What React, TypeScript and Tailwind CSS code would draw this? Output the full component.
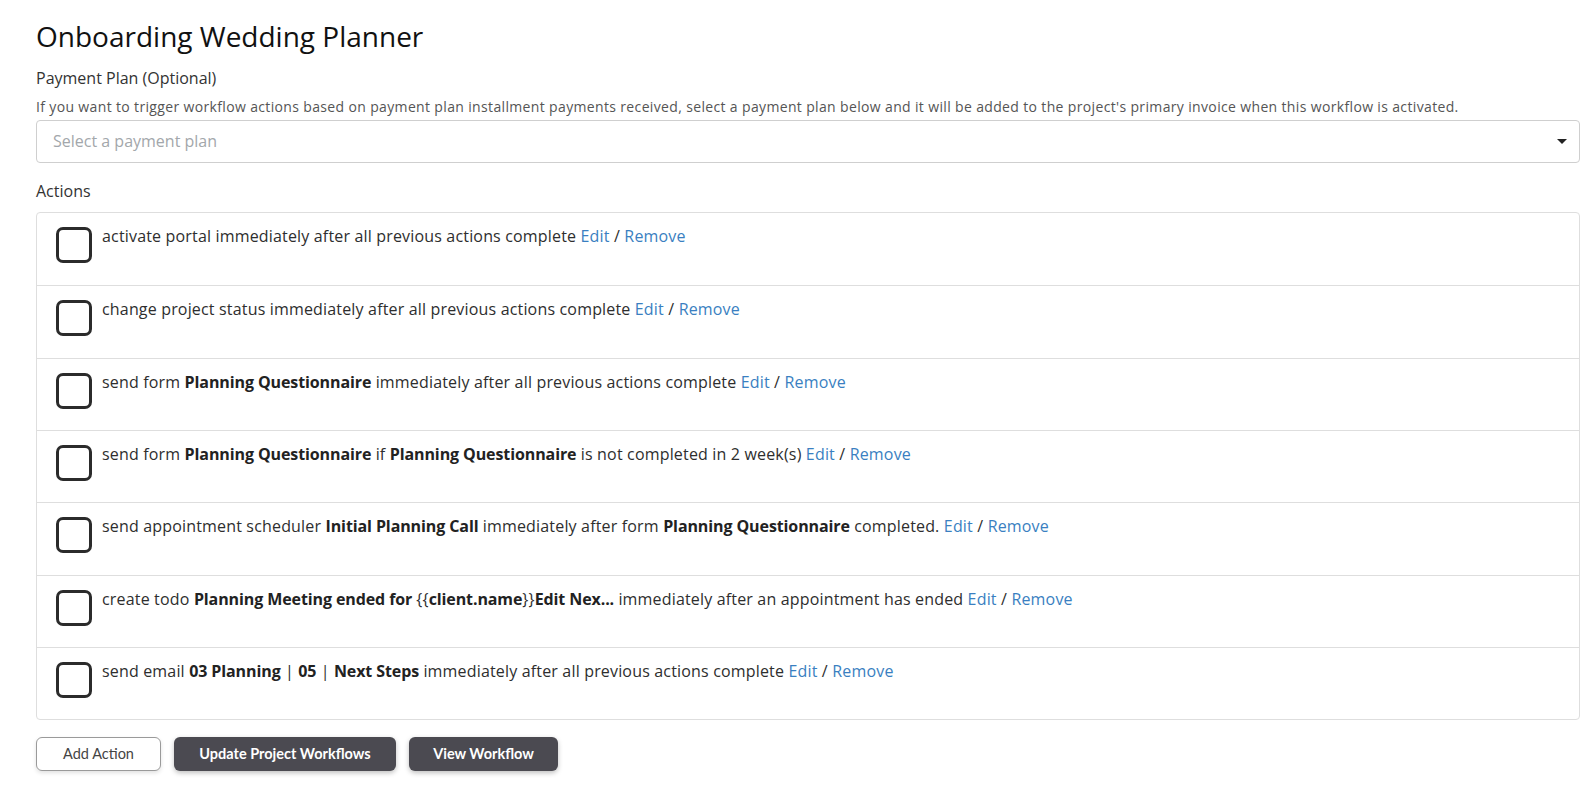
import React from "react";

type Part = { t: string; b?: boolean };

const rows: Part[][] = [
  [{ t: "activate portal immediately after all previous actions complete" }],
  [{ t: "change project status immediately after all previous actions complete" }],
  [
    { t: "send form " },
    { t: "Planning Questionnaire", b: true },
    { t: " immediately after all previous actions complete" },
  ],
  [
    { t: "send form " },
    { t: "Planning Questionnaire", b: true },
    { t: " if " },
    { t: "Planning Questionnaire", b: true },
    { t: " is not completed in 2 week(s)" },
  ],
  [
    { t: "send appointment scheduler " },
    { t: "Initial Planning Call", b: true },
    { t: " immediately after form " },
    { t: "Planning Questionnaire", b: true },
    { t: " completed." },
  ],
  [
    { t: "create todo " },
    { t: "Planning Meeting ended for ", b: true },
    { t: "{{" },
    { t: "client.name", b: true },
    { t: "}}" },
    { t: "Edit Nex...", b: true },
    { t: " immediately after an appointment has ended" },
  ],
  [
    { t: "send email " },
    { t: "03 Planning", b: true },
    { t: " | " },
    { t: "05", b: true },
    { t: " | " },
    { t: "Next Steps", b: true },
    { t: " immediately after all previous actions complete" },
  ],
];

export default function App() {
  return (
    <div className="min-h-[787px] bg-white px-[36px] pt-[20px] font-['Open_Sans',sans-serif] text-[#2e2e2e]">
      <h1 className="text-[28px] leading-[1.2] font-normal text-[#111]">Onboarding Wedding Planner</h1>
      <div className="mt-[15.6px] text-[16px] leading-[1.2] text-[#333]">Payment Plan (Optional)</div>
      <div className="mt-[10.8px] text-[14px] leading-[1.2] tracking-[0.35px] text-[#555]">
        If you want to trigger workflow actions based on payment plan installment payments received, select a payment
        plan below and it will be added to the project's primary invoice when this workflow is activated.
      </div>
      <div className="mt-[4px] flex h-[43px] w-[1544px] items-center justify-between rounded-[4px] border border-[#cfcfcf] pl-[16px] pr-[12px]">
        <span className="text-[16px] leading-[1.2] text-[#a3a7ab]">Select a payment plan</span>
        <span className="h-0 w-0 border-x-[5px] border-t-[5px] border-x-transparent border-t-[#222]" />
      </div>
      <div className="mt-[19px] text-[16px] leading-[1.2] text-[#333]">Actions</div>
      <div className="mt-[10.8px] w-[1544px] rounded-[4px] border border-[#dedede]">
        {rows.map((parts, i) => (
          <div
            key={i}
            className={
              "flex h-[72.33px] items-start gap-[10px] pl-[19px] pt-[14px] " + (i > 0 ? "border-t border-[#dedede]" : "")
            }
          >
            <div className="h-[36px] w-[36px] shrink-0 rounded-[7px] border-[3px] border-[#2b2b2b]" />
            <div className="text-[16px] leading-[1.2] tracking-[0.17px] text-[#2e2e2e]">
              {parts.map((p, j) =>
                p.b ? (
                  <b key={j} className="font-bold tracking-[-0.1px] text-[#222]">
                    {p.t}
                  </b>
                ) : (
                  <span key={j}>{p.t}</span>
                )
              )}{" "}
              <span className="text-[#3a7fc1]">Edit</span> / <span className="text-[#3a7fc1]">Remove</span>
            </div>
          </div>
        ))}
      </div>
      <div className="mt-[17px] flex gap-[13px] font-['Lato',sans-serif]">
        <button className="h-[34px] w-[125px] rounded-[6px] border border-[#9a9a9a] bg-white text-[14.5px] text-[#444] shadow-[0_2px_4px_rgba(0,0,0,0.12)]">
          Add Action
        </button>
        <button className="h-[34px] w-[222px] rounded-[6px] bg-[#4b4a51] text-[14.5px] font-bold text-white shadow-[0_2px_5px_rgba(0,0,0,0.25)]">
          Update Project Workflows
        </button>
        <button className="h-[34px] w-[149px] rounded-[6px] bg-[#4b4a51] text-[14.5px] font-bold text-white shadow-[0_2px_5px_rgba(0,0,0,0.25)]">
          View Workflow
        </button>
      </div>
    </div>
  );
}
